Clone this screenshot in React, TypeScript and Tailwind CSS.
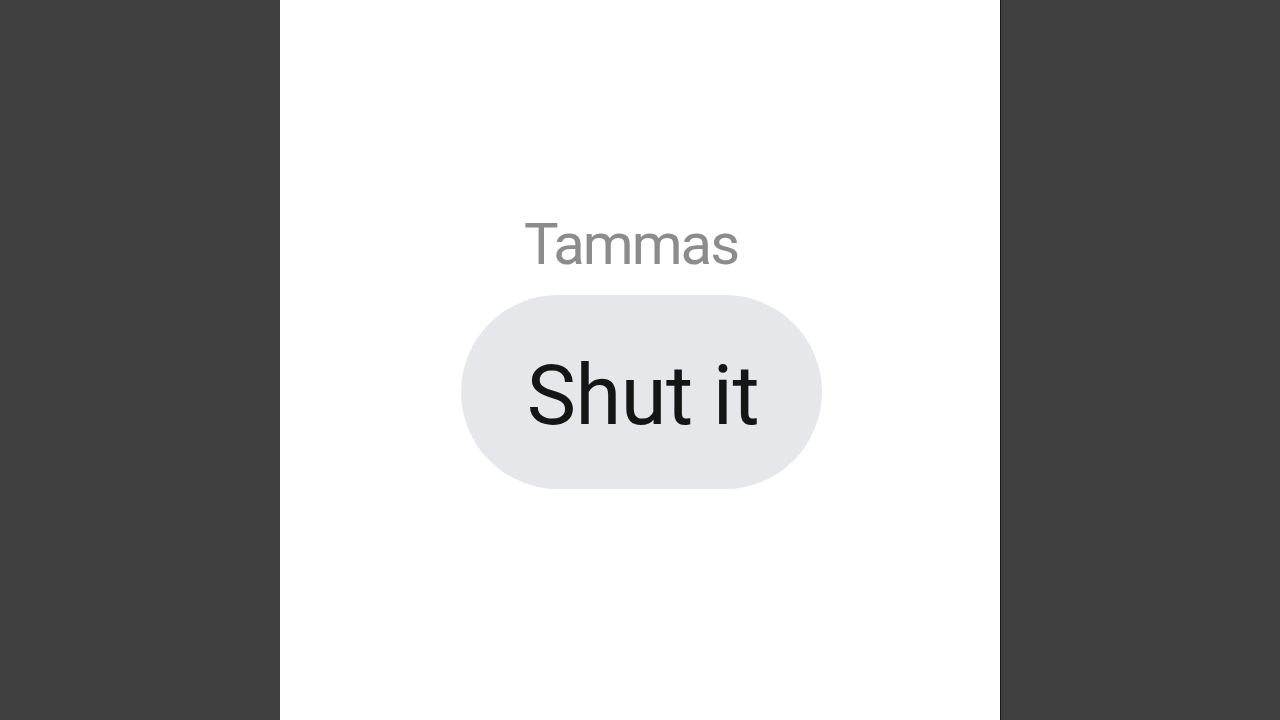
import React from "react";

export default function App() {
  return (
    <div className="flex h-screen w-full bg-[#404040] pl-[280px]">
      <div
        className="box-content flex w-[720px] flex-col items-center border-r border-[#1a1a1a] bg-white pt-[206px]"
        style={{ fontFamily: 'Roboto, "Noto Sans", sans-serif' }}
      >
        <div className="mr-[18px] text-[58px] leading-[76px] tracking-[-2px] text-[#8c8c8c]">Tammas</div>
        <div className="ml-[2px] mt-[13px] flex h-[194px] w-[361px] items-center justify-center rounded-full bg-[#e5e7eb] pl-[4px] pt-[8px] text-[83px] tracking-[-0.5px] text-[#151515]">
          Shut it
        </div>
      </div>
    </div>
  );
}
